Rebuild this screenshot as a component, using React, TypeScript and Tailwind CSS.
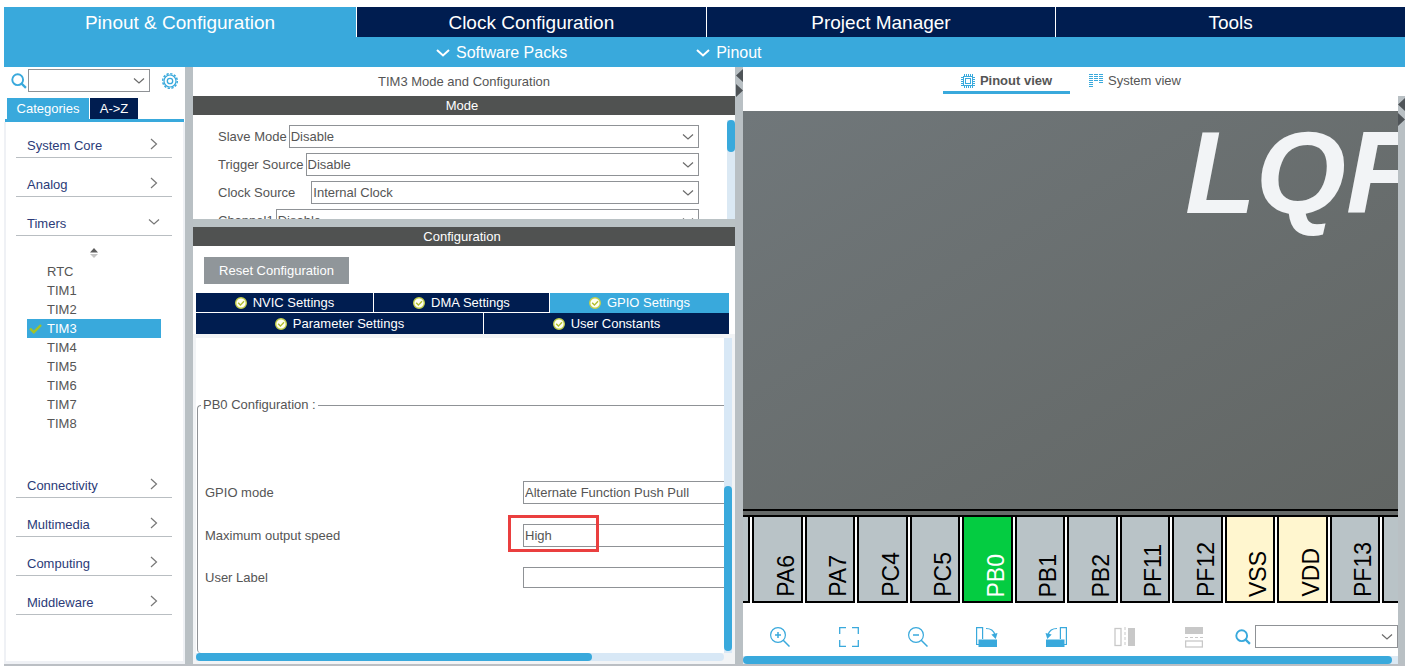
import React from 'react';
import clsx from 'clsx';

const MAIN_TABS = ['Clock Configuration', 'Project Manager', 'Tools'];
const TOP_CATEGORIES = ['System Core', 'Analog'];
const BOTTOM_CATEGORIES = ['Connectivity', 'Multimedia', 'Computing', 'Middleware'];
const TIMERS = ['RTC', 'TIM1', 'TIM2', 'TIM3', 'TIM4', 'TIM5', 'TIM6', 'TIM7', 'TIM8'];

const MODE_FIELDS = [
    { id: 'slave-mode', label: 'Slave Mode', value: 'Disable', gap: 'gap-[2px]' },
    { id: 'trigger-source', label: 'Trigger Source', value: 'Disable', gap: 'gap-[2px]' },
    { id: 'clock-source', label: 'Clock Source', value: 'Internal Clock', gap: 'gap-4' },
    { id: 'channel1', label: 'Channel1', value: 'Disable', gap: 'gap-[2px]' },
];

type PinKind = 'io' | 'active' | 'power';

const PINS: { name: string; kind: PinKind }[] = [
    { name: 'PA6', kind: 'io' },
    { name: 'PA7', kind: 'io' },
    { name: 'PC4', kind: 'io' },
    { name: 'PC5', kind: 'io' },
    { name: 'PB0', kind: 'active' },
    { name: 'PB1', kind: 'io' },
    { name: 'PB2', kind: 'io' },
    { name: 'PF11', kind: 'io' },
    { name: 'PF12', kind: 'io' },
    { name: 'VSS', kind: 'power' },
    { name: 'VDD', kind: 'power' },
    { name: 'PF13', kind: 'io' },
];

const PIN_STYLE: Record<PinKind, string> = {
    io: 'bg-[#b9c3c7] text-black',
    active: 'bg-[#04cc41] text-white',
    power: 'bg-[#fff6cf] text-black',
};

/* ---------- icons ---------- */

const ChevronDown: React.FC<{ className?: string; bold?: boolean }> = ({ className, bold }) => (
    <svg className={className} width="14" height="8" viewBox="0 0 14 8" fill="none" stroke="currentColor" strokeWidth={bold ? 2 : 1.2}>
        <path d={bold ? 'M1 1l6 5.500 6-5.500' : 'M2 1.500l5 4.500 5-4.500'} />
    </svg>
);

const ChevronRight = () => (
    <svg width="8" height="12" viewBox="0 0 8 12" fill="none" stroke="currentColor" strokeWidth="1.2">
        <path d="M1 1l5.500 5L1 11" />
    </svg>
);

const SearchIcon = () => (
    <svg className="shrink-0 text-[#39a9dc]" width="16" height="16" viewBox="0 0 16 16" fill="none" stroke="currentColor" strokeWidth="1.900">
        <circle cx="6.700" cy="6.700" r="5.400" />
        <path d="M10.600 10.600l4.300 4.300" strokeWidth="2.200" />
    </svg>
);

const GearIcon = () => (
    <svg width="18" height="18" viewBox="0 0 18 18" fill="none" stroke="#39a9dc">
        <circle cx="9" cy="9" r="7.300" strokeWidth="1.500" strokeDasharray="2.300 1.522" />
        <circle cx="9" cy="9" r="6" strokeWidth="1.200" />
        <circle cx="9" cy="9" r="2.700" strokeWidth="1.300" />
    </svg>
);

const CheckBadge = () => (
    <svg width="12" height="12" viewBox="0 0 12 12" fill="none">
        <circle cx="6" cy="6" r="5.300" fill="#fffff2" stroke="#c3cf4a" strokeWidth="1.400" />
        <path d="M3.200 5.800l2.200 2.300 3.600-3.900" stroke="#b0bd2c" strokeWidth="1.400" />
    </svg>
);

const ChipIcon = () => (
    <svg width="14" height="14" viewBox="0 0 14 14" fill="none" stroke="#39a9dc">
        <path d="M3.500 0v2M5.500 0v2M7.500 0v2M9.500 0v2M11.500 0v2M3.500 12v2M5.500 12v2M7.500 12v2M9.500 12v2M11.500 12v2M0 3.500h2M0 5.500h2M0 7.500h2M0 9.500h2M0 11.500h2M12 3.500h2M12 5.500h2M12 7.500h2M12 9.500h2M12 11.500h2" />
        <rect x="2.500" y="2.500" width="9" height="9" />
        <rect x="4.500" y="4.500" width="5" height="5" />
    </svg>
);

const SystemIcon = () => (
    <svg width="14" height="14" viewBox="0 0 14 14" fill="none" stroke="#39a9dc">
        <path d="M0 .5h14M0 2.500h14M0 4.500h14M0 6.500h14" strokeDasharray="4 1" />
        <path d="M0 8.500h4M0 10.500h4M0 12.500h4M10 8.500h4" />
    </svg>
);

const ZoomIcon: React.FC<{ plus?: boolean }> = ({ plus }) => (
    <svg width="20" height="20" viewBox="0 0 20 20" fill="none" stroke="#39a9dc" strokeWidth="1.200">
        <circle cx="8" cy="8" r="7.400" />
        <path d="M13.200 13.200l6.300 6.300" strokeWidth="1.500" />
        <path d={plus ? 'M5 8h6M8 5v6' : 'M5 8h6'} strokeWidth="1.500" />
    </svg>
);

const FitIcon = () => (
    <svg width="20" height="20" viewBox="0 0 20 20" fill="none" stroke="#39a9dc" strokeWidth="1.300">
        <path d="M.7 7V.7H7M13 .7h6.300V7M19.300 13v6.300H13M7 19.300H.7V13" />
    </svg>
);

const RotateIcon: React.FC<{ left?: boolean }> = ({ left }) => (
    <svg className={clsx(left && '-scale-x-100')} width="22" height="20" viewBox="0 0 22 20" fill="none" stroke="#39a9dc">
        <path d="M3 17.500H.6V.6h6V12" strokeWidth="1.200" />
        <rect x="2.500" y="12.500" width="18.500" height="7.500" fill="#39a9dc" stroke="none" />
        <path d="M10 1.500c4.500 0 7.800 2.500 8.800 6" strokeWidth="1.200" />
        <path d="M15.300 7.500l6.200-1.500-1.800 6z" fill="#39a9dc" stroke="none" />
    </svg>
);

const FlipHorizontalIcon = () => (
    <svg width="22" height="20" viewBox="0 0 22 20" fill="none" stroke="#c8c8c8">
        <rect x="1" y="1.500" width="6" height="17" strokeWidth="1.300" />
        <path d="M11 0v20" strokeDasharray="3 2" />
        <rect x="14" y="1" width="7" height="18" fill="#c8c8c8" stroke="none" />
    </svg>
);

const FlipVerticalIcon = () => (
    <svg width="18" height="22" viewBox="0 0 18 22" fill="none" stroke="#c8c8c8">
        <rect x="0" y="1" width="18" height="7" fill="#c8c8c8" stroke="none" />
        <path d="M0 11.500h18" strokeDasharray="3 2" />
        <rect x=".6" y="15" width="16.800" height="6" strokeWidth="1.300" />
    </svg>
);

const SplitterArrows = () => (
    <svg className="block w-full" height="30" viewBox="0 0 8 30" preserveAspectRatio="xMaxYMin slice" fill="#4f5458">
        <path d="M8 2v13L1 8.500zM1 17v13l7-6.500z" />
    </svg>
);

/* ---------- small parts ---------- */

interface ComboProps {
    id?: string;
    label?: string;
    value?: string;
    className?: string;
}

const Combo: React.FC<ComboProps> = ({ id, label, value = '', className }) => (
    <div className={clsx('relative min-w-0 flex-1', className)}>
        <select id={id} aria-label={label} className="block h-[23px] w-full appearance-none border border-[#8f9296] bg-white pl-px">
            <option>{value}</option>
        </select>
        <ChevronDown className="pointer-events-none absolute top-2 right-1 text-[#6b6b6b]" />
    </div>
);

const SectionBar: React.FC<{ children: React.ReactNode }> = ({ children }) => (
    <h2 className="h-[19px] shrink-0 bg-[#505251] pr-1 text-center leading-[19px] text-white">{children}</h2>
);

const CategoryRow: React.FC<{ name: string; open?: boolean }> = ({ name, open }) => (
    <button className="mt-[14px] flex h-[25px] w-full items-center justify-between border-b border-[#b9bec2] pt-[2px] pr-[14px] pl-[11px] text-[#2b3b78]">
        {name}
        <span className={clsx('mb-1 text-[#777]', open && '-mr-[3px]')}>{open ? <ChevronDown /> : <ChevronRight />}</span>
    </button>
);

const SettingsTab: React.FC<{ name: string; className?: string }> = ({ name, className }) => (
    <button className={clsx('flex items-center justify-center gap-[6px] border-white text-white', className)}>
        <CheckBadge />
        {name}
    </button>
);

/* ---------- panels ---------- */

const Header = () => (
    <header className="shrink-0 bg-[#39a9dc] text-white">
        <nav className="grid h-[30px] grid-cols-[352px_1fr_1fr_1fr] text-[19px] leading-7">
            <button className="pt-[2px]">Pinout &amp; Configuration</button>
            {MAIN_TABS.map(tab => (
                <button key={tab} className="border-l border-white bg-[#001d50] pt-[2px]">{tab}</button>
            ))}
        </nav>
        <div className="flex h-[30px] items-center gap-[129px] pt-px pl-[432px] text-base">
            <button className="flex items-center gap-[6px]"><ChevronDown bold />Software Packs</button>
            <button className="flex items-center gap-[6px]"><ChevronDown bold />Pinout</button>
        </div>
    </header>
);

const Sidebar = () => (
    <aside className="flex min-h-0 flex-col overflow-hidden">
        <div className="flex items-center pt-[2px] pl-[7px]">
            <SearchIcon />
            <Combo label="Search peripherals" className="mr-[11px] ml-px" />
            <button aria-label="Settings" className="mr-[6px]"><GearIcon /></button>
        </div>
        <div className="mt-[6px] mr-px ml-px flex shrink-0 gap-px border-b-[3px] border-[#39a9dc] pl-[2px] text-white">
            <button className="h-[21px] w-[82px] bg-[#39a9dc]">Categories</button>
            <button className="h-[21px] w-12 bg-[#001d50]">A-&gt;Z</button>
        </div>
        <div className="min-h-0 flex-1 overflow-hidden border-x-2 border-b-3 border-[#eff1f5] pr-[11px] pl-[10px]">
            <div className="-mt-[3px]">
                {TOP_CATEGORIES.map(name => <CategoryRow key={name} name={name} />)}
                <CategoryRow name="Timers" open />
            </div>
            <div className="pt-3 pb-[26px]">
                <svg className="mx-auto block" width="10" height="10" viewBox="0 0 10 10">
                    <path d="M1 4.500L5 0l4 4.500z" fill="#5c5c5c" />
                    <path d="M1 6h8L5 10z" fill="#c4c4c4" />
                </svg>
                <ul className="mt-1 mr-[11px] ml-[11px]">
                    {TIMERS.map(timer => (
                        <li
                            key={timer}
                            className={clsx('flex h-[19px] items-center', timer === 'TIM3' ? 'bg-[#39a9dc] text-white' : 'text-[#555]')}
                        >
                            <span className="w-5 shrink-0 pl-[2px]">
                                {timer === 'TIM3' && (
                                    <svg width="13" height="10" viewBox="0 0 13 10" fill="none" stroke="#a5c326" strokeWidth="2.400">
                                        <path d="M1 4.500l3.800 3.700L12 1" />
                                    </svg>
                                )}
                            </span>
                            {timer}
                        </li>
                    ))}
                </ul>
            </div>
            {BOTTOM_CATEGORIES.map(name => <CategoryRow key={name} name={name} />)}
        </div>
    </aside>
);

const ModeSection = () => (
    <section className="flex h-[152px] shrink-0 flex-col overflow-hidden">
        <h1 className="h-[29px] shrink-0 text-center leading-[29px]">TIM3 Mode and Configuration</h1>
        <SectionBar>Mode</SectionBar>
        <div className="flex min-h-0 flex-1">
            <div className="flex flex-1 flex-col gap-[5px] overflow-hidden pt-[10px] pr-7 pl-[25px]">
                {MODE_FIELDS.map(field => (
                    <div key={field.id} className={clsx('flex h-[23px] shrink-0 items-center', field.gap)}>
                        <label htmlFor={field.id}>{field.label}</label>
                        <Combo id={field.id} value={field.value} />
                    </div>
                ))}
            </div>
            <div className="mt-[5px] w-2 bg-[#dbe9f4]">
                <div className="h-8 rounded-full bg-[#39a9dc]" />
            </div>
        </div>
    </section>
);

const ConfigSection = () => (
    <section className="flex min-h-0 flex-1 flex-col">
        <SectionBar>Configuration</SectionBar>
        <button className="mt-[11px] ml-[11px] h-[27px] w-[145px] shrink-0 bg-[#90969a] text-white">Reset Configuration</button>
        <div className="mt-[9px] mr-[6px] ml-[3px] shrink-0">
            <div className="grid h-5 grid-cols-[178fr_176fr_179fr] items-start bg-white">
                <SettingsTab name="NVIC Settings" className="h-[19px] border-r bg-[#001d50] pt-px" />
                <SettingsTab name="DMA Settings" className="h-[19px] border-r bg-[#001d50] pt-px" />
                <SettingsTab name="GPIO Settings" className="h-5 bg-[#39a9dc]" />
            </div>
            <div className="grid h-[21px] grid-cols-[288fr_245fr]">
                <SettingsTab name="Parameter Settings" className="border-r bg-[#001d50]" />
                <SettingsTab name="User Constants" className="bg-[#001d50]" />
            </div>
        </div>
        <div className="flex min-h-0 flex-1 flex-col bg-[#f2f4f6] px-[3px] pt-1 pb-[3px]">
            <div className="flex min-h-0 flex-1">
                <div className="flex min-w-0 flex-1 flex-col overflow-hidden bg-white pt-[57px] pl-px">
                    <fieldset className="min-w-0 flex-1 rounded-l-[4px] border-t border-l border-[#8f9296]">
                        <legend className="ml-[3px] px-[2px] leading-5">PB0 Configuration :</legend>
                        <div className="grid grid-cols-[318px_1fr] items-center gap-y-5 pt-[66px] pl-[7px]">
                            <label htmlFor="gpio-mode">GPIO mode</label>
                            <select id="gpio-mode" className="h-[23px] appearance-none border border-r-0 border-[#8f9296] pl-px">
                                <option>Alternate Function Push Pull</option>
                            </select>
                            <label htmlFor="speed">Maximum output speed</label>
                            <div className="relative">
                                <select id="speed" className="block h-[23px] w-full appearance-none border border-r-0 border-[#8f9296] pl-px">
                                    <option>High</option>
                                </select>
                                <div className="pointer-events-none absolute -top-[9px] -left-[15px] h-[37px] w-[91px] border-3 border-[#ea3f3f]" />
                            </div>
                            <label htmlFor="user-label">User Label</label>
                            <input id="user-label" type="text" className="h-[21px] min-w-0 border border-r-0 border-[#8f9296] px-px" />
                        </div>
                    </fieldset>
                </div>
                <div className="flex w-2 shrink-0 flex-col justify-end bg-[#d8e8f6] pb-[2px]">
                    <div className="h-[165px] rounded-full bg-[#39a9dc]" />
                </div>
            </div>
            <div className="mr-2 h-2 shrink-0 rounded-r-full bg-[#d8e8f6]">
                <div className="h-2 w-3/4 rounded-full bg-[#39a9dc]" />
            </div>
        </div>
    </section>
);

const PinoutPane = () => (
    <main className="flex min-h-0 flex-col overflow-hidden">
        <div className="flex h-11 shrink-0 justify-center pl-[2px]">
            <button className="flex h-[27px] w-[127px] items-center justify-center gap-[5px] border-b-3 border-[#39a9dc] pt-1 font-bold">
                <ChipIcon />
                Pinout view
            </button>
            <button className="flex h-[27px] w-[130px] items-center justify-center gap-[5px] border-b-3 border-transparent pt-1">
                <SystemIcon />
                System view
            </button>
        </div>
        <div className="flex min-h-0 flex-1 flex-col overflow-hidden">
            <div className="relative min-h-0 flex-1 overflow-hidden border-b-2 border-black bg-linear-to-br from-[#70777a] to-[#626664]">
                <span className="absolute top-0 left-[442px] text-[116px] leading-[124px] font-bold text-[#f2f4f6] italic">LQFP</span>
            </div>
            <div className="h-1 shrink-0 bg-[#666a69]" />
            <div className="flex h-[88px] shrink-0 gap-[2px] border-t-2 border-black">
                <div className="w-[7px] shrink-0 border-r-2 border-b-2 border-black bg-[#b9c3c7]" />
                {PINS.map(pin => (
                    <div
                        key={pin.name}
                        className={clsx('flex flex-1 items-end justify-end border-x-2 border-b-2 border-black pr-[3px] pb-1 text-[23px] leading-6', PIN_STYLE[pin.kind])}
                    >
                        <span className="rotate-180 [writing-mode:vertical-rl]">{pin.name}</span>
                    </div>
                ))}
                <div className="w-4 shrink-0 border-b-2 border-l-2 border-black bg-[#b9c3c7]" />
            </div>
        </div>
        <div className="flex h-[53px] shrink-0 items-center pt-[22px] pb-2 pl-[2px]">
            <div className="grid flex-1 grid-cols-7 items-center justify-items-center">
                <button aria-label="Zoom in"><ZoomIcon plus /></button>
                <button aria-label="Best fit"><FitIcon /></button>
                <button aria-label="Zoom out"><ZoomIcon /></button>
                <button aria-label="Rotate right"><RotateIcon /></button>
                <button aria-label="Rotate left"><RotateIcon left /></button>
                <button aria-label="Flip horizontally"><FlipHorizontalIcon /></button>
                <button aria-label="Flip vertically"><FlipVerticalIcon /></button>
            </div>
            <div className="flex w-[170px] items-center gap-1 pl-[7px]">
                <SearchIcon />
                <Combo label="Search pin" />
            </div>
        </div>
        <div className="h-2 shrink-0 bg-[#dbe9f4] pr-[6px]">
            <div className="h-2 rounded-full bg-[#39a9dc]" />
        </div>
    </main>
);

export default function App() {
    return (
        <div className="flex h-screen flex-col overflow-hidden bg-white pt-[7px] pb-[5px] pl-1 font-['Liberation_Sans',Arial,sans-serif] text-[13px] text-[#555]">
            <Header />
            <div className="grid min-h-0 flex-1 grid-cols-[181px_8px_minmax(0,542fr)_8px_minmax(0,655fr)_7px] grid-rows-[minmax(0,1fr)] border-b-2 border-[#bbbfc4]">
                <Sidebar />
                <div className="bg-[#b9c0c4]" />
                <div className="flex min-h-0 flex-col">
                    <ModeSection />
                    <div className="h-2 shrink-0 bg-[#bac2c5]" />
                    <ConfigSection />
                </div>
                <div className="bg-[#b9c0c4]"><SplitterArrows /></div>
                <PinoutPane />
                <div className="mt-[29px] bg-[#b9c0c4]"><SplitterArrows /></div>
            </div>
        </div>
    );
}
